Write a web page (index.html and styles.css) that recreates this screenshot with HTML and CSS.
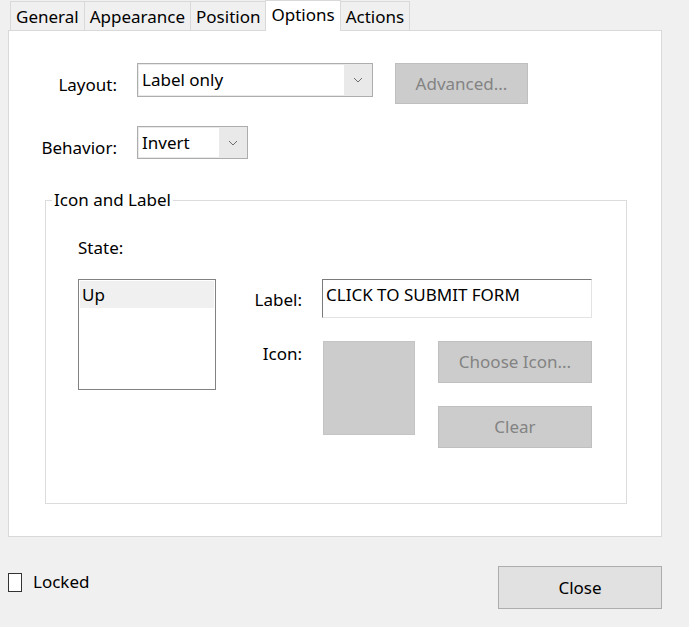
FILE: index.html
```html
<!DOCTYPE html>
<html lang="en">
<head>
    <meta charset="UTF-8">
    <title>Button Properties - Options</title>
    <link rel="stylesheet" href="styles.css">
</head>
<body>
    <div class="tabs">
        <div class="tab">General</div>
        <div class="tab">Appearance</div>
        <div class="tab">Position</div>
        <div class="tab active">Options</div>
        <div class="tab">Actions</div>
    </div>

    <div class="panel">
        <div class="row row-layout">
            <span class="field-label">Layout:</span>
            <div class="combo combo-layout">
                <span class="combo-value">Label only</span>
                <span class="combo-arrow">
                    <svg width="10" height="6" viewBox="0 0 10 6"><polyline points="1,1 5,5 9,1" fill="none" stroke="#6d6d6d" stroke-width="1"/></svg>
                </span>
            </div>
            <button class="btn btn-disabled btn-advanced">Advanced...</button>
        </div>

        <div class="row row-behavior">
            <span class="field-label">Behavior:</span>
            <div class="combo combo-behavior">
                <span class="combo-value">Invert</span>
                <span class="combo-arrow">
                    <svg width="10" height="6" viewBox="0 0 10 6"><polyline points="1,1 5,5 9,1" fill="none" stroke="#6d6d6d" stroke-width="1"/></svg>
                </span>
            </div>
        </div>

        <fieldset class="group">
            <legend>Icon and Label</legend>
            <div class="state-title">State:</div>
            <div class="group-body">
                <div class="listbox">
                    <div class="list-item selected">Up</div>
                </div>
                <div class="props">
                    <span class="prop-label prop-label-text">Label:</span>
                    <div class="text-input">CLICK TO SUBMIT FORM</div>
                    <span class="prop-label prop-label-icon">Icon:</span>
                    <div class="icon-row">
                        <div class="icon-preview"></div>
                        <div class="icon-buttons">
                            <button class="btn btn-disabled btn-icon">Choose Icon...</button>
                            <button class="btn btn-disabled btn-icon">Clear</button>
                        </div>
                    </div>
                </div>
            </div>
        </fieldset>
    </div>

    <div class="footer">
        <label class="check">
            <span class="checkbox"></span>
            <span>Locked</span>
        </label>
        <button class="btn btn-close">Close</button>
    </div>
</body>
</html>
```

FILE: styles.css
```css
body {
    margin: 0;
    background-color: #f0f0f0;
    color: #000;
    font-family: "Noto Sans", "Open Sans", sans-serif;
    font-size: 17px;
    line-height: 22px;
}
.tabs {
    display: flex;
    align-items: flex-end;
    height: 30px;
    padding-left: 10px;
}
.tab {
    box-sizing: border-box;
    height: 29px;
    padding: 2px 5px 0;
    border: 1px solid #d9d9d9;
    border-bottom: none;
    background: #f0f0f0;
    display: flex;
    align-items: center;
}
.tab + .tab {
    margin-left: -1px;
}
.tab.active {
    position: relative;
    z-index: 1;
    height: 31px;
    margin-bottom: -1px;
    padding: 0 5px 3px;
    background: #fff;
}
.panel {
    box-sizing: border-box;
    width: 654px;
    height: 507px;
    margin-left: 8px;
    padding-top: 32px;
    border: 1px solid #d9d9d9;
    background: #fff;
}
.row {
    display: flex;
    align-items: flex-start;
}
.row-behavior {
    margin-top: 22px;
}
.field-label {
    width: 108px;
    margin-right: 20px;
    padding-top: 11px;
    text-align: right;
}
.combo {
    box-sizing: border-box;
    display: flex;
    padding: 1px;
    border: 1px solid #adadad;
    background: #e9e9e9;
}
.combo-layout {
    width: 236px;
    height: 34px;
}
.combo-behavior {
    width: 111px;
    height: 33px;
}
.combo-value {
    flex: 1;
    padding-left: 3px;
    background: #fff;
    display: flex;
    align-items: center;
}
.combo-arrow {
    width: 27px;
    display: flex;
    align-items: center;
    justify-content: center;
}
.btn {
    box-sizing: border-box;
    font: inherit;
    padding: 0;
    border: 1px solid #adadad;
    background: #e1e1e1;
    color: #000;
}
.btn-disabled {
    border-color: #bfbfbf;
    background: #cccccc;
    color: #838383;
}
.btn-advanced {
    width: 133px;
    height: 41px;
    margin-left: 22px;
}
.group {
    box-sizing: border-box;
    width: 582px;
    min-width: 0;
    margin: 30px 0 0 36px;
    padding: 0 0 55px 32px;
    border: 1px solid #dcdcdc;
}
.group legend {
    margin-left: -26px;
    padding: 0 2px;
}
.state-title {
    margin-top: 26px;
}
.group-body {
    display: flex;
    align-items: flex-start;
    margin-top: 20px;
}
.listbox {
    box-sizing: border-box;
    width: 138px;
    height: 111px;
    padding: 1px;
    border: 1px solid #828282;
}
.list-item {
    height: 27px;
    padding-left: 2px;
    display: flex;
    align-items: center;
}
.list-item.selected {
    background: #f0f0f0;
}
.props {
    display: grid;
    grid-template-columns: 86px 270px;
    column-gap: 20px;
    row-gap: 23px;
}
.prop-label {
    text-align: right;
}
.prop-label-text {
    padding-top: 10px;
}
.prop-label-icon {
    padding-top: 2px;
}
.text-input {
    box-sizing: border-box;
    height: 39px;
    padding: 4px 3px 0;
    border: 1px solid #e3e3e3;
    border-top-color: #7a7a7a;
    border-left-color: #7a7a7a;
}
.icon-row {
    display: flex;
}
.icon-preview {
    box-sizing: border-box;
    width: 94px;
    height: 94px;
    margin-left: 1px;
    border: 1px solid #c4c4c4;
    background: #cccccc;
}
.icon-buttons {
    display: flex;
    flex-direction: column;
    gap: 23px;
    margin-left: 23px;
}
.btn-icon {
    width: 154px;
    height: 42px;
}
.footer {
    display: flex;
    justify-content: space-between;
    align-items: flex-start;
    width: 654px;
    margin: 29px 0 0 8px;
}
.check {
    display: flex;
    align-items: center;
    gap: 11px;
    margin-top: 5px;
}
.checkbox {
    box-sizing: border-box;
    width: 14px;
    height: 19px;
    border: 1px solid #333;
    background: #fff;
}
.btn-close {
    width: 164px;
    height: 43px;
}
```
